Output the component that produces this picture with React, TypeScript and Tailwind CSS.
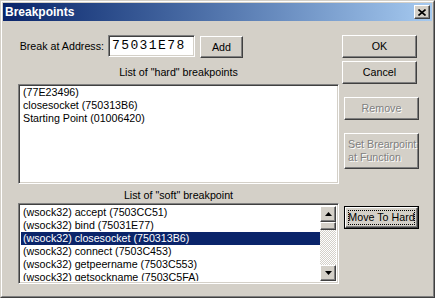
import React from 'react';

const raised =
  'border border-t-white border-l-white border-b-[#404040] border-r-[#404040] shadow-[inset_-1px_-1px_#808080,inset_1px_1px_#d4d0c8] bg-[#d4d0c8]';
const sunken =
  'border border-t-[#808080] border-l-[#808080] border-b-white border-r-white shadow-[inset_1px_1px_#404040,inset_-1px_-1px_#d4d0c8] bg-white';

function Button({
  label,
  className = '',
  disabled = false,
}: {
  label: React.ReactNode;
  className?: string;
  disabled?: boolean;
}) {
  return (
    <div className={`${raised} flex items-center justify-center leading-[13px] whitespace-nowrap ${className}`}>
      <span className={disabled ? 'text-[#808080] [text-shadow:1px_1px_0_#fff]' : 'text-black'}>{label}</span>
    </div>
  );
}

function Arrow({ up }: { up?: boolean }) {
  return (
    <div className={`${raised} w-[16px] h-[16px] flex items-center justify-center`}>
      <svg width="7" height="4" viewBox="0 0 7 4">
        {up ? <path d="M3.5 0 L7 4 L0 4 Z" fill="#000" /> : <path d="M0 0 L7 0 L3.5 4 Z" fill="#000" />}
      </svg>
    </div>
  );
}

const hardItems = ['(77E23496)', 'closesocket (750313B6)', 'Starting Point (01006420)'];

const softItems = [
  '(wsock32) accept (7503CC51)',
  '(wsock32) bind (75031E77)',
  '(wsock32) closesocket (750313B6)',
  '(wsock32) connect (7503C453)',
  '(wsock32) getpeername (7503C553)',
  '(wsock32) getsockname (7503C5FA)',
];

export default function App() {
  return (
    <div
      className="w-[435px] h-[298px] bg-[#d4d0c8] border border-t-[#d4d0c8] border-l-[#d4d0c8] border-b-[#404040] border-r-[#404040] text-[10.7px] text-black"
      style={{ fontFamily: '"Liberation Sans", Arial, sans-serif' }}
    >
      <div className="h-full border border-t-white border-l-white border-b-[#808080] border-r-[#808080] p-px flex flex-col">
        {/* title bar */}
        <div className="h-[18px] flex items-center bg-gradient-to-r from-[#0a246a] to-[#a6caf0] pl-[2px] pr-[2px]">
          <span className="text-white font-bold text-[12px] leading-[18px]">Breakpoints</span>
          <div className={`${raised} ml-auto w-[16px] h-[14px] flex items-center justify-center`}>
            <svg width="8" height="7" viewBox="0 0 8 7">
              <path d="M0.5 0.5 L7.5 6.5 M7.5 0.5 L0.5 6.5" stroke="#000" strokeWidth="1.6" />
            </svg>
          </div>
        </div>

        {/* body */}
        <div className="flex pl-[15px] pt-[14px]">
          <div className="w-[321px] flex flex-col">
            <div className="flex items-start h-[23px]">
              <div className="w-[90px] h-[22px] flex items-center justify-end pr-[4px] whitespace-nowrap">
                Break at Address:
              </div>
              <div className={`${sunken} w-[87px] h-[22px] pl-[3px] pt-[3px]`}>
                <span
                  className="block text-[13px] tracking-[1.4px] leading-[13px]"
                  style={{ fontFamily: '"Liberation Mono", "DejaVu Sans Mono", monospace' }}
                >
                  75031E78
                </span>
              </div>
              <Button label="Add" className="ml-[5px] mt-px w-[43px] h-[22px]" />
            </div>

            <div className="mt-[8px] text-center leading-[13px]">List of "hard" breakpoints</div>
            <div className={`${sunken} mt-[5px] h-[100px] pl-[2px] pt-[1px]`}>
              {hardItems.map((t) => (
                <div key={t} className="h-[13px] leading-[13px] pl-[2px]">
                  {t}
                </div>
              ))}
            </div>

            <div className="mt-[5px] text-center leading-[13px]">List of "soft" breakpoint</div>
            <div className={`${sunken} mt-[1px] h-[81px] p-[2px] flex`}>
              <div className="flex-1 overflow-hidden">
                {softItems.map((t, i) => (
                  <div
                    key={t}
                    className={`h-[13px] leading-[13px] pl-[2px] whitespace-nowrap ${
                      i === 2 ? 'bg-[#0a246a] text-white' : ''
                    }`}
                  >
                    {t}
                  </div>
                ))}
              </div>
              <div className="w-[16px] flex flex-col">
                <Arrow up />
                <div className={`${raised} h-[8px]`} />
                <div className="flex-1 bg-[repeating-conic-gradient(#d4d0c8_0_25%,#ffffff_0_50%)] bg-[length:2px_2px]" />
                <Arrow />
              </div>
            </div>
          </div>

          <div className="ml-[3px] flex flex-col">
            <Button label="OK" className="w-[75px] h-[23px]" />
            <Button label="Cancel" className="mt-[3px] w-[75px] h-[23px]" />
            <Button label="Remove" disabled className="ml-[2px] mt-[13px] w-[75px] h-[23px]" />
            <Button
              label={
                <>
                  Set Brearpoint
                  <br />
                  at Function
                </>
              }
              disabled
              className="ml-[2px] mt-[13px] w-[75px] h-[36px] !justify-start pl-[3px] text-left"
            />
            <div className="ml-[2px] mt-[37px] w-[75px] h-[23px] border border-black">
              <div className={`${raised} h-full flex items-center justify-center p-[2px]`}>
                <div className="w-full h-full border border-dotted border-black flex items-center justify-center leading-[13px] whitespace-nowrap">
                  Move To Hard
                </div>
              </div>
            </div>
          </div>
        </div>
      </div>
    </div>
  );
}
